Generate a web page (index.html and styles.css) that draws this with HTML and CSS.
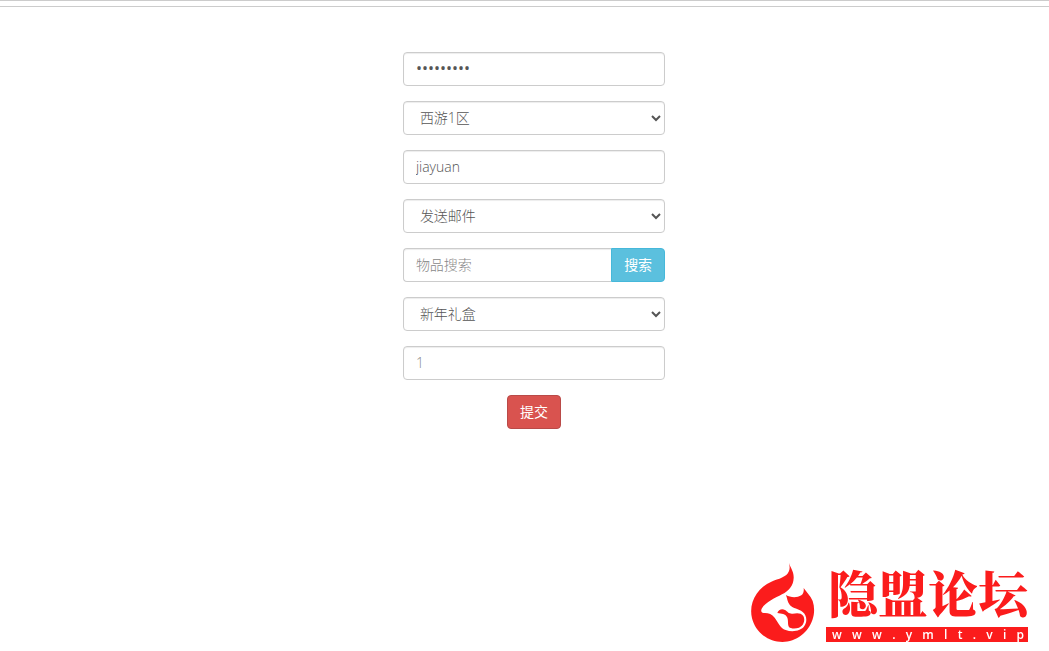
FILE: index.html
```html
<!DOCTYPE html>
<html lang="zh-CN">
<head>
    <meta charset="UTF-8">
    <meta name="viewport" content="width=device-width, initial-scale=1.0">
    <title>GM</title>
    <link rel="stylesheet" href="styles.css">
</head>
<body>
    <div class="topbar"></div>
    <main class="main">
        <form class="gm-form">
            <input class="form-control" type="password" value="123456789" aria-label="密码">
            <select class="form-control" aria-label="选区">
                <option>西游1区</option>
            </select>
            <input class="form-control" type="text" value="jiayuan" aria-label="角色">
            <select class="form-control" aria-label="功能">
                <option>发送邮件</option>
            </select>
            <div class="input-group">
                <input class="form-control" type="text" placeholder="物品搜索" aria-label="物品搜索">
                <button class="btn btn-info" type="button">搜索</button>
            </div>
            <select class="form-control" aria-label="物品">
                <option>新年礼盒</option>
            </select>
            <input class="form-control" type="text" placeholder="1" aria-label="数量">
            <button class="btn btn-danger" type="button">提交</button>
        </form>
    </main>

    <!-- forum logo in the corner -->
    <div class="logo">
        <svg class="logo-icon" viewBox="33 27 192 237" aria-hidden="true">
            <path fill="#fb1c1c" d="M147 27C151 40 162 53 161 72C160 94 148 110 126 121C106 132 78 143 65 164C62 170 64 176 71 177C84 176 95 180 104 191C114 204 120 222 137 228C158 236 184 230 193 216C202 203 201 184 188 174C176 164 159 164 150 154C142 145 142 132 138 123C151 131 171 132 184 124C191 119 192 111 191 102C198 113 212 126 218 141C234 190 204 243 157 259C105 276 49 246 36 193C25 147 51 101 94 83C116 74 140 70 147 51C150 43 149 35 147 27Z"/>
            <path fill="#fb1c1c" d="M112 177C115 168 125 163 135 168C143 173 146 180 158 179C171 177 183 176 190 186C197 199 190 216 177 221C166 225 151 224 147 219C142 211 146 198 141 189C136 179 125 180 112 177Z"/>
        </svg>
        <div class="logo-text">
            <div class="logo-name">隐盟论坛</div>
            <div class="logo-url">
                <span>w</span><span>w</span><span>w</span><span>.</span><span>y</span><span>m</span><span>l</span><span>t</span><span>.</span><span>v</span><span>i</span><span>p</span>
            </div>
        </div>
    </div>
</body>
</html>
```
FILE: styles.css
```css
*{
    box-sizing: border-box;
}
body{
    margin: 0;
    background: #fff;
    color: #555;
    font-family: "Open Sans", "Noto Sans CJK SC", sans-serif;
    font-size: 14px;
    font-weight: 300;
    line-height: 20px;
}
.topbar{
    height: 7px;
    border-top: 1px solid #ccc;
    border-bottom: 1px solid #ccc;
}
.main{
    padding: 45px 0 0 19px;
}
.gm-form{
    display: flex;
    flex-direction: column;
    gap: 15px;
    width: 25vw;
    min-width: 220px;
    margin: 0 auto;
}
.form-control{
    width: 100%;
    height: 34px;
    padding: 5px 12px 7px;
    border: 1px solid #ccc;
    border-radius: 4px;
    background: #fff;
    box-shadow: inset 0 1px 1px rgba(0,0,0,.075);
    color: #555;
    font: inherit;
}
.form-control[type="password"]{
    font-size: 16px;
    font-weight: 400;
}
.form-control::placeholder{
    color: #888;
    opacity: 1;
}
.input-group{
    display: flex;
}
.input-group .form-control{
    flex: 1;
    min-width: 0;
    border-right: 0;
    border-radius: 4px 0 0 4px;
}
.btn{
    height: 34px;
    padding: 6px 12px;
    border: 1px solid transparent;
    border-radius: 4px;
    color: #fff;
    font: inherit;
    font-weight: 400;
    white-space: nowrap;
    cursor: pointer;
}
.btn-info{
    border-color: #46b8da;
    border-radius: 0 4px 4px 0;
    background: #5bc0de;
}
.btn-danger{
    align-self: center;
    border-color: #b94a48;
    background: #d9534f;
}
.logo{
    position: fixed;
    right: 21px;
    bottom: 9px;
    display: flex;
    align-items: flex-end;
    gap: 11px;
    color: #fb1c1c;
}
.logo-icon{
    width: 64px;
    height: 79px;
}
.logo-name{
    padding: 0 0 4px 2px;
    font-family: "Noto Serif CJK SC", "Noto Sans CJK SC", serif;
    font-size: 50px;
    font-weight: 900;
    line-height: 64px;
}
.logo-url{
    display: flex;
    justify-content: space-between;
    height: 15px;
    padding: 0 4px 0 6px;
    background: #fb1c1c;
    color: #fff;
    font-size: 12px;
    font-weight: 600;
    line-height: 15px;
}
```
